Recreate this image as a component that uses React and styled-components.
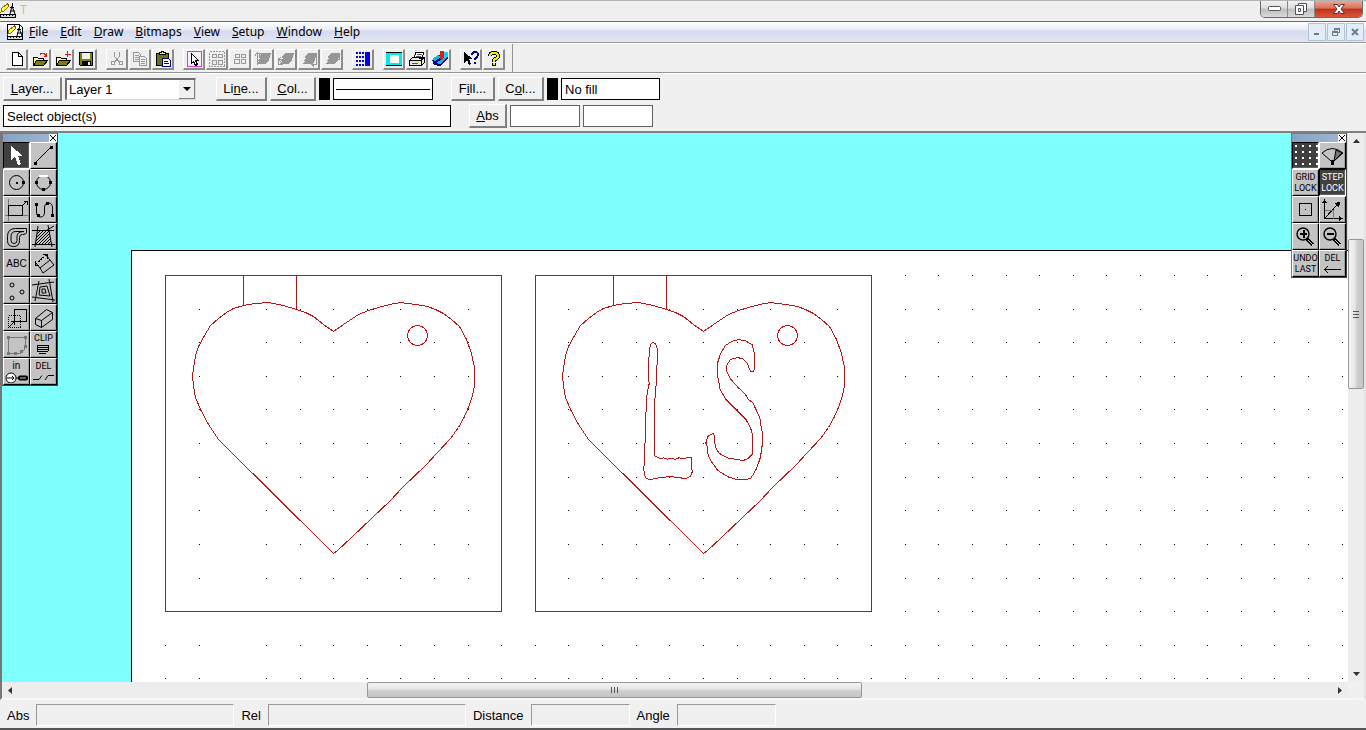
import React, { useState } from "react";
import styled, { createGlobalStyle } from "styled-components";

const GlobalStyle = createGlobalStyle`
    * {
        box-sizing: border-box;
    }

    body {
        margin: 0;
        background: #f0f0f0;
        color: #000;
        font: 13px "Liberation Sans", Arial, sans-serif;
    }

    button,
    input,
    select {
        font: inherit;
        color: inherit;
        margin: 0;
    }

    svg {
        display: block;
    }
`;

const Window = styled.div`
    height: 100vh;
    display: flex;
    flex-direction: column;
    overflow: hidden;
`;

const TitleBar = styled.header`
    height: 22px;
    flex: none;
    display: flex;
    align-items: flex-start;
    border-top: 1px solid #b4b4b4;
    border-bottom: 1px solid #6e6e6e;
    background: #efefef;
`;

const TitleIcon = styled.span`
    padding-top: 1px;
`;

const TitleText = styled.span`
    margin-left: 4px;
    font-family: "Liberation Sans Narrow", "Roboto", sans-serif;
    font-size: 12px;
    line-height: 19px;
    color: #e4b478;
`;

const WindowButtons = styled.div`
    margin-left: auto;
    margin-right: 3px;
    display: flex;
    border: 1px solid #6a6a6a;
    border-top: 0;
    border-radius: 0 0 5px 5px;
    overflow: hidden;
`;

const WindowButton = styled.button`
    width: ${(props) => (props.$close ? 47 : 27)}px;
    height: 16px;
    padding: 0;
    display: flex;
    align-items: center;
    justify-content: center;
    border: 0;
    border-right: ${(props) => (props.$close ? "0" : "1px solid #8a8a8a")};
    background: ${(props) =>
        props.$close
            ? "linear-gradient(#e8a894, #d9705a 45%, #c03018 50%, #d8583c)"
            : "linear-gradient(#f2f2f2, #dcdcdc 45%, #bdbdbd 50%, #dadada)"};
`;

const MenuBar = styled.nav`
    height: 21px;
    flex: none;
    display: flex;
    align-items: center;
    padding: 0 2px 0 7px;
    border-bottom: 1px solid #9a9a9a;
    background: linear-gradient(#fff, #e8ecf7 40%, #d5dbee 45%, #e2e7f5);
`;

const MenuItem = styled.button`
    height: 19px;
    padding: 0 6px;
    border: 0;
    background: none;
    font-family: "Noto Sans", "Open Sans", sans-serif;
    font-size: 12px;
    line-height: 18px;
`;

const ChildButtons = styled.div`
    margin-left: auto;
    display: flex;
    gap: 1px;
`;

const ChildButton = styled.button`
    width: 18px;
    height: 18px;
    padding: 0;
    display: flex;
    align-items: center;
    justify-content: center;
    border: 1px solid #b4c4d8;
    background: #e2edf8;
`;

const ToolBar = styled.div`
    height: 30px;
    flex: none;
    display: flex;
    gap: 8px;
    padding-left: 6px;
    border-top: 1px solid #fff;
    border-bottom: 1px solid #969696;
`;

const ToolGroup = styled.div`
    display: flex;
    gap: 1px;
    padding: 5px 1px 0 0;
`;

const ToolEnd = styled.div`
    width: 1px;
    margin-left: -2px;
    background: #969696;
`;

const ToolButton = styled.button`
    width: 22px;
    height: 21px;
    padding: 0;
    display: flex;
    align-items: center;
    justify-content: center;
    border: 1px solid #fff;
    border-right: 2px solid #8c8c8c;
    border-bottom: 2px solid #8c8c8c;
    background: #efefef;
`;

const Controls = styled.div`
    height: 60px;
    flex: none;
    display: flex;
    flex-direction: column;
    gap: 3px;
    padding: 3px 3px 0;
    border-top: 1px solid #fff;
    border-bottom: 2px solid #808080;
`;

const ControlRow = styled.div`
    height: 24px;
    flex: none;
    display: flex;
    align-items: center;
    gap: 3px;
`;

const Gap = styled.span`
    width: ${(props) => props.$size}px;
`;

const PushButton = styled.button`
    width: ${(props) => props.$width}px;
    height: 24px;
    padding: 0;
    border: 1px solid #fff;
    border-right: 2px solid #808080;
    border-bottom: 2px solid #808080;
    background: #f0f0f0;
`;

const ComboBox = styled.label`
    position: relative;
    width: 131px;
    height: 22px;
    border: 2px solid #6e6e6e;
    border-right: 1px solid #d8d8d8;
    border-bottom: 1px solid #d8d8d8;
    background: #fff;
`;

const ComboSelect = styled.select`
    width: 100%;
    height: 19px;
    padding: 0 18px 0 2px;
    border: 0;
    appearance: none;
    background: #fff;
`;

const ComboArrow = styled.span`
    position: absolute;
    top: 0;
    right: 0;
    width: 16px;
    height: 19px;
    display: flex;
    align-items: center;
    justify-content: center;
    border-right: 1px solid #808080;
    border-bottom: 1px solid #808080;
    background: #f0f0f0;
    pointer-events: none;
`;

const Swatch = styled.span`
    width: 11px;
    height: 22px;
    background: #000;
`;

const LineSample = styled.div`
    width: 100px;
    height: 22px;
    padding: 0 2px;
    display: flex;
    align-items: center;
    border: 1px solid #000;
    background: #fff;
`;

const LineStroke = styled.hr`
    width: 100%;
    margin: 0;
    border: 0;
    border-top: 1px solid #000;
`;

const Field = styled.input`
    width: ${(props) => props.$width}px;
    height: 22px;
    padding: 0 3px;
    border: 1px solid ${(props) => (props.$soft ? "#606060" : "#000")};
    background: #fff;
`;

const Workspace = styled.main`
    flex: 1;
    min-height: 0;
    display: grid;
    grid-template-columns: minmax(0, 1fr) 16px;
    grid-template-rows: minmax(0, 1fr) 16px;
    border-left: 2px solid #777;
    border-right: 2px solid #e4e4e4;
    border-bottom: 2px solid #f7f7f7;
`;

const Canvas = styled.section`
    position: relative;
    overflow: hidden;
    background: #80ffff;
`;

const Palette = styled.aside`
    position: absolute;
    top: 0;
    ${(props) => props.$side}: ${(props) => (props.$side === "left" ? 0 : 1)}px;
    border: 1px solid #404040;
    border-top-color: #777;
    border-left-color: #777;
    background: #000;
`;

const PaletteTitle = styled.div`
    height: 8px;
    display: flex;
    justify-content: flex-end;
    background: linear-gradient(90deg, #86a2c4, #a2b8d4);
`;

const PaletteClose = styled.button`
    width: 8px;
    height: 8px;
    padding: 0;
    display: flex;
    align-items: center;
    justify-content: center;
    border: 0;
    background: #fff;
`;

const PaletteGrid = styled.div`
    display: grid;
    grid-template-columns: 27px 27px;
    grid-auto-rows: 27px;
`;

const PaletteButton = styled.button`
    padding: 0;
    display: flex;
    flex-direction: column;
    align-items: center;
    justify-content: center;
    border: 1px solid;
    border-color: ${(props) =>
        props.$on ? "#000 #fff #fff #000" : "#fff #000 #000 #fff"};
    box-shadow: inset -1px -1px
        ${(props) => (props.$on ? "#606060" : "#a0a0a0")};
    background: ${(props) => (props.$on ? "#404040" : "#c3c3c3")};
    color: ${(props) => (props.$on ? "#fff" : "#000")};
`;

const TinyText = styled.span`
    font-family: "Liberation Sans Narrow", "Roboto", sans-serif;
    font-size: 9px;
    line-height: 11px;
`;

const SmallText = styled.span`
    font-size: 10px;
    line-height: 12px;
`;

const ScrollBar = styled.div`
    display: flex;
    flex-direction: ${(props) => (props.$vertical ? "column" : "row")};
    background: #ededed;
`;

const ScrollArrow = styled.button`
    flex: 0 0 17px;
    padding: 0;
    display: flex;
    align-items: center;
    justify-content: center;
    border: 0;
    background: none;
`;

const ScrollSpace = styled.div`
    flex: ${(props) => props.$part} 1 0;
`;

const ScrollThumb = styled.div`
    flex: ${(props) => props.$part} 1 0;
    display: flex;
    align-items: center;
    justify-content: center;
    border: 1px solid #969696;
    border-radius: 2px;
    background: linear-gradient(
        ${(props) => (props.$vertical ? "90deg" : "180deg")},
        #f5f5f5,
        #e4e4e4 45%,
        #cfcfcf 55%,
        #c4c4c4
    );
`;

const StatusBar = styled.footer`
    height: 30px;
    flex: none;
    display: flex;
    align-items: center;
    gap: 7px;
    padding: 2px 7px 0;
    border-bottom: 2px solid #555;
`;

const StatusLabel = styled.label`
    display: flex;
    align-items: center;
    gap: 7px;
`;

const StatusField = styled.input`
    width: ${(props) => props.$width}px;
    height: 22px;
    padding: 0 3px;
    border: 1px solid #fff;
    border-top-color: #9a9a9a;
    border-left-color: #9a9a9a;
    background: #efefef;
`;

const Pix = ({ size = 16, children }) => (
    <svg
        width={size}
        height={size}
        viewBox={`0 0 ${size} ${size}`}
        fill="none"
        stroke="#000"
        shapeRendering="crispEdges"
        aria-hidden="true"
    >
        {children}
    </svg>
);

const AppLogo = ({ page }) => (
    <Pix size={16}>
        {page && <path d="M.5.5h12l3 3v12H.5z" fill="#fff" />}
        <path d="M1 10l1-4 5-4 2 2-5 5z" fill="#ffff30" stroke="#807000" />
        <path d="M6 2l2-1 1 2-1 1z" fill="#e02020" stroke="none" />
        <path d="M12 1v3M10 5h4" />
        <path d="M12 4l-2 8M12 4l3 8M10 9h5" shapeRendering="auto" />
        <path d="M.5 12.5h15v3H.5z" fill="#d8e0d0" />
        <path d="M3.5 13v1M6.5 13v1M9.5 13v1M12.5 13v1" />
    </Pix>
);

const Folder = () => (
    <>
        <path d="M1.5 14V6.5h4l1 1h5V10" fill="#ffff80" />
        <path d="M1.5 14.5l3-5h11l-4 5z" fill="#808000" />
    </>
);

const Stack = () => (
    <path
        d="M7 2h9v1l-2 2h1v1l-2 2h1v1l-4 4H2v-1l2-2H3V9l2-2H4V6z"
        fill="#969696"
        stroke="none"
    />
);

const fileTools = [
    ["New", <path d="M3.5 1.5h6l4 4v9h-10zM9.5 1.5v4h4" fill="#fff" />],
    [
        "Open",
        <>
            <Folder />
            <path d="M8 3.5q3-3 6 1M14.500 2v3h-3" stroke="#d02020" />
        </>,
    ],
    [
        "Insert",
        <>
            <Folder />
            <path d="M12.500 0v6M10 3h6" stroke="#d02020" />
        </>,
    ],
    [
        "Save",
        <>
            <path d="M1.500 1.500h13v13h-12l-1-1z" fill="#808000" />
            <path d="M4 2h8v6H4z" fill="#efefef" stroke="none" />
            <path d="M4 10h9v5H4z" fill="#000" stroke="none" />
            <path d="M10 11h2v3h-2z" fill="#efefef" stroke="none" />
        </>,
    ],
];

const editTools = [
    [
        "Cut",
        <g stroke="#999">
            <path d="M5 1l1 5 5 6M11 1l-1 5-5 6" />
            <circle cx="4" cy="12" r="2" />
            <circle cx="12" cy="12" r="2" />
        </g>,
    ],
    [
        "Copy",
        <g stroke="#999">
            <path d="M1.500 1.500h5l2 2v7h-7zM3 4.500h4M3 6.500h4M3 8.500h4" />
            <path
                d="M7.500 5.500h5l2 2v7h-7zM9 8.500h4M9 10.500h4M9 12.500h4"
                fill="#efefef"
            />
        </g>,
    ],
    [
        "Paste",
        <>
            <path d="M1.500 2.500h12v12h-12z" fill="#707018" />
            <path d="M4.500 3.500h6v-2h-2v-1h-2v1h-2z" fill="#e8e8a0" />
            <path d="M7.500 7.500h6l2 2v6h-8z" fill="#fff" stroke="#000080" />
            <path d="M9 10.500h4M9 12.500h5" stroke="#000080" />
        </>,
    ],
];

const objectTools = [
    [
        "Select",
        <>
            <path d="M1.500.5h14v15h-14z" fill="#fbeefb" stroke="#d838d8" />
            <path d="M5.500 2.500v10l2-2 2 4 2-1-2-4h3z" fill="#fff" />
        </>,
    ],
    [
        "Group",
        <g stroke="#999">
            <path d="M.5.5h15v15H.5z" strokeDasharray="2 1" />
            <path d="M3.500 3.500h4v3h-4zM9.500 3.500h4v3h-4zM3.500 9.500h4v4h-4zM9.500 9.500h4v4h-4z" />
        </g>,
    ],
    [
        "Ungroup",
        <g stroke="#999">
            <path d="M3.500 3.500h4v3h-4zM9.500 3.500h4v3h-4zM2.500 8.500h5v4h-5zM9.500 8.500h4v4h-4z" />
        </g>,
    ],
    [
        "To front",
        <>
            <Stack />
            <path d="M2.500 14V2M0 4.500l2.500-3 2.500 3M2 2.500h6" stroke="#969696" />
        </>,
    ],
    [
        "Forward",
        <>
            <Stack />
            <path d="M6 8.500H.5v5H5M3 6l-3 2.500 3 2" stroke="#969696" />
        </>,
    ],
    [
        "Backward",
        <>
            <Stack />
            <path d="M12 4.500h3.500v9H11M13 11l-2 2.500 2 2" stroke="#969696" />
        </>,
    ],
    [
        "To back",
        <>
            <Stack />
            <path d="M10 8.500h5.500V3" stroke="#969696" />
        </>,
    ],
];

const gridTools = [
    [
        "Grid",
        <>
            <path
                d="M2 1v14M5 1v14M8 1v14"
                stroke="#0000e0"
                strokeWidth="2"
                strokeDasharray="2 2"
            />
            <path d="M10 1h5v14h-5z" fill="#0000f0" stroke="none" />
        </>,
    ],
];

const viewTools = [
    [
        "Full view",
        <>
            <path d="M0 1h16v14H0z" fill="#00e8f0" stroke="none" />
            <path d="M0 1.500h16M0 14.500h16" />
            <path d="M4 4h9v8H4z" fill="#fff" stroke="none" />
        </>,
    ],
    [
        "Print",
        <>
            <path d="M5 7l2-6h8l-2 6z" fill="#fff" />
            <path d="M.5 9.500l3-3h12v5l-3 3H.5zM1 9.500h11l3-3M12.500 9.500v4" fill="#e8e8e8" />
            <path d="M8 3.500h5M7 5.500h5M3 12h6" stroke="#555" />
            <path d="M8 11h2v1H8z" fill="#e8e800" stroke="none" />
        </>,
    ],
    [
        "Library",
        <>
            <path d="M0 9l8-5 8 0v4l-8 7-6-1z" fill="#000090" stroke="none" />
            <path d="M0 8l6-4 3 2-6 4zM4 12l9-6h3l-8 7z" fill="#10b8e0" stroke="none" />
            <path d="M8 0h4v7l-3 2-1-1z" fill="#d82020" stroke="none" />
            <path d="M12 1h4v5l-4 1z" fill="#10d8e8" stroke="none" />
        </>,
    ],
];

const helpTools = [
    [
        "What is this",
        <>
            <path d="M1 1v11l3-3 2 5 2-1-2-5h4z" fill="#000" stroke="none" />
            <path
                d="M9 4q0-3 3-3 3 0 3 3 0 1-3 4v1M12 11v2"
                stroke="#000080"
                strokeWidth="2"
            />
        </>,
    ],
    [
        "Help topics",
        <>
            <path d="M4 5q0-3 4-3t4 3q0 2-4 4v2M8 12v3" strokeWidth="4" />
            <path d="M4 5q0-3 4-3t4 3q0 2-4 4v2M8 12v2" stroke="#f0f000" strokeWidth="2" />
        </>,
    ],
];

const toolGroups = [
    fileTools,
    editTools,
    objectTools,
    gridTools,
    viewTools,
    helpTools,
];

const Magnifier = ({ plus }) => (
    <Pix size={25}>
        <circle cx="10" cy="10" r="6" strokeWidth="1.400" shapeRendering="auto" />
        <path d="M7 10h7" strokeWidth="2" />
        {plus && <path d="M10.500 6v8" strokeWidth="2" />}
        <path d="M14 15l6 6" strokeWidth="4" />
        <path d="M15 16l5 5" stroke="#c8c8c8" />
    </Pix>
);

const drawTools = [
    [
        "Select",
        <Pix size={25}>
            <path
                d="M7 3v14l4-3 3 8 3-1-3-8h5z"
                fill="#fff"
                stroke="none"
            />
        </Pix>,
    ],
    [
        "Line",
        <Pix size={25}>
            <path d="M4 20L20 4" />
            <path d="M3 19h3v3H3zM19 3h3v3h-3z" fill="#000" stroke="none" />
        </Pix>,
    ],
    [
        "Circle",
        <Pix size={25}>
            <circle cx="12.500" cy="12.500" r="7" shapeRendering="auto" />
            <path d="M12 12h2v2h-2zM18 11h3v3h-3z" fill="#000" stroke="none" />
        </Pix>,
    ],
    [
        "Arc",
        <Pix size={25}>
            <circle cx="12.500" cy="12.500" r="7" shapeRendering="auto" />
            <path d="M8 6.500q4-2 9 0" stroke="#fff" strokeWidth="2" />
            <path
                d="M4 11h3v3H4zM18 11h3v3h-3zM11 18h3v3h-3z"
                fill="#000"
                stroke="none"
            />
        </Pix>,
    ],
    [
        "Rectangle",
        <Pix size={25}>
            <path d="M4.500 2v22M1 18.500h23" stroke="#777" />
            <path d="M4.500 8.500h14v10h-14zM18 9l4-4M20 4.500h3.500v3" />
        </Pix>,
    ],
    [
        "Curve",
        <Pix size={25}>
            <path
                d="M5.500 8v7q0 5 4 5t4-5v-4q0-5 4-5t4 5v8"
                shapeRendering="auto"
            />
            <path
                d="M4 6h3v3H4zM6 17h3v3H6zM15 5h3v3h-3zM20 17h3v3h-3z"
                fill="#000"
                stroke="none"
            />
        </Pix>,
    ],
    [
        "Offset",
        <Pix size={25}>
            <g shapeRendering="auto">
                <path d="M22.500 4.500h-11q-8 0-8 8v4q0 6 6 6t6-6v-3q0-3 3-3 4 0 4-2z" />
                <path d="M20 7.500h-8q-5 0-5 5v4q0 3 3 3t3-3v-4q0-5 7-5" />
            </g>
        </Pix>,
    ],
    [
        "Hatch",
        <Pix size={25}>
            <path d="M1 6.500h22M17 1l4 22M7 2L4 23M1 20.500h23M16 6l7-4" shapeRendering="auto" />
            <path
                d="M6 10l4-4M6 13l7-7M5 17L16 6M5 20L18 7M8 20L19 9M11 20l8-8M14 20l6-6M17 20l3-3"
                shapeRendering="auto"
            />
        </Pix>,
    ],
    ["Text", <SmallText>ABC</SmallText>],
    [
        "Dimension",
        <Pix size={25}>
            <path d="M9 17l10-8 4 5-11 8zM5 12l4 5M15 4l4 5" shapeRendering="auto" />
            <path d="M5 13L15 4" strokeDasharray="2 1" />
            <path d="M4 10v4h4M12 3.500h4v4" />
        </Pix>,
    ],
    [
        "Point",
        <Pix size={25}>
            <g shapeRendering="auto">
                <circle cx="8" cy="7" r="2" />
                <circle cx="18" cy="14" r="2" />
                <circle cx="8" cy="20" r="2" />
            </g>
        </Pix>,
    ],
    [
        "Contour",
        <Pix size={25}>
            <g shapeRendering="auto">
                <path d="M1 7l22-3M18 1l4 23M8 3L4 23M1 19l23 3" />
                <path d="M9 9l7-1 3 10-11-1zM11 11h3l1 4h-4z" />
            </g>
        </Pix>,
    ],
    [
        "Scale",
        <Pix size={25}>
            <path d="M4.500 10.500h12v12h-12z" strokeDasharray="1 1" />
            <path d="M10.500 4.500h12v12h-12zM5 22l5-5M7 16.500h3.500V20" />
        </Pix>,
    ],
    [
        "Solid",
        <Pix size={25}>
            <g shapeRendering="auto">
                <path d="M4.500 13.500l11-9 6 3v7l-11 8-6-3zM4.500 13.500l6 2v7M10.500 15.500l11-8" />
            </g>
        </Pix>,
    ],
    [
        "Edit nodes",
        <Pix size={25}>
            <path d="M4.500 5.500h17v9q-2 8-10 7h-7z" stroke="#777" />
            <path
                d="M3 4h3v3H3zM20 4h3v3h-3zM20 13h3v3h-3zM16 18h3v3h-3zM10 20h3v3h-3zM3 20h3v3H3z"
                fill="#777"
                stroke="none"
            />
        </Pix>,
    ],
    [
        "Clipboard",
        <>
            <TinyText>CLIP</TinyText>
            <Pix size={13}>
                <path d="M0 1.500h12M0 3.500h12M0 5.500h12M1 7.500h10M2 9.500h7M.5 1v7M11.500 1v6" />
            </Pix>
        </>,
    ],
    [
        "Units",
        <>
            <SmallText>in</SmallText>
            <svg width="23" height="11" fill="none" stroke="#000" aria-hidden="true">
                <circle cx="6" cy="6" r="5" fill="#fff" />
                <path d="M2 6h7M7 4l2 2-2 2M11 6h3" />
                <rect x="14" y="4.500" width="8" height="3" rx="1" strokeWidth="2" />
            </svg>
        </>,
    ],
    [
        "Delete part",
        <>
            <TinyText>DEL</TinyText>
            <svg width="23" height="11" fill="none" stroke="#000" aria-hidden="true">
                <path d="M1 7.500h6l3-4M13 8l3-4.500h6" />
            </svg>
        </>,
    ],
];

const dotRows = [2, 8, 14, 20];

const snapTools = [
    [
        "Show grid",
        <Pix size={25}>
            {dotRows.map((y) => (
                <path
                    key={y}
                    d={`M2 ${y + 1}h23`}
                    stroke="#fff"
                    strokeWidth="2"
                    strokeDasharray="2 5"
                />
            ))}
        </Pix>,
    ],
    [
        "Redraw",
        <Pix size={25}>
            <g shapeRendering="auto">
                <path d="M2 10q10-9 21 0l-9 8h-3z" />
                <path d="M16 7l6 3-8 8z" fill="#777" />
                <path d="M11 17h3v5h-3z" fill="#000" stroke="none" />
            </g>
        </Pix>,
    ],
    [
        "Grid lock",
        <>
            <TinyText>GRID</TinyText>
            <TinyText>LOCK</TinyText>
        </>,
    ],
    [
        "Step lock",
        <>
            <TinyText>STEP</TinyText>
            <TinyText>LOCK</TinyText>
        </>,
    ],
    [
        "Attach",
        <Pix size={25}>
            <path d="M6.500 6.500h12v12h-12z" />
            <path d="M12 12h1v1h-1z" fill="#000" stroke="none" />
        </Pix>,
    ],
    [
        "Axes",
        <Pix size={25}>
            <path d="M4.500 3v18.500H23M5 21L18 7" />
            <path
                d="M2 6l2.500-4L7 6zM19 19l4 2.500-4 2.500zM14 6l6-1-1 6z"
                fill="#000"
                stroke="none"
            />
            <path d="M5 13.500h8v8" stroke="#777" />
        </Pix>,
    ],
    ["Zoom in", <Magnifier plus />],
    ["Zoom out", <Magnifier />],
    [
        "Undo last",
        <>
            <TinyText>UNDO</TinyText>
            <TinyText>LAST</TinyText>
        </>,
    ],
    [
        "Delete",
        <>
            <TinyText>DEL</TinyText>
            <svg width="19" height="11" fill="none" stroke="#000" aria-hidden="true">
                <path d="M1 5.500h17M5 2L1.500 5.500 5 9" />
            </svg>
        </>,
    ],
];

const menus = ["File", "Edit", "Draw", "Bitmaps", "View", "Setup", "Window", "Help"];

const HEART =
    "168,56 158,49 148,41 140,37 131,34 118,30 103,27 90,28 78,30 68,33 61,37 53,43 45,50 39,60 33,71 30,80 28,93 27,100 28,110 30,122 35,134 43,149 53,164 168,278 172,275 186,262 206,243 225,225 237,212 260,190 285,163 293,152 299,141 303,132 307,120 309,110 309,92 306,78 301,64 294,51 286,44 278,38 270,34 262,31 250,29 235,27 224,29 213,32 203,35 193,39 181,47";

const LETTER_L =
    "67,66 75,70 80,85 82,105 78,150 77,190 71,265 71,405 88,414 100,412 112,416 122,413 134,417 145,412 158,415 170,412 184,412 183,430 185,455 180,468 165,475 140,470 115,469 90,471 60,477 48,475 41,462 40,440 43,425 44,320 50,215 56,190 53,150 57,85 62,70";

const LETTER_S =
    "373,145 367,154 360,152 350,128 338,116 322,111 300,117 288,135 288,152 300,175 322,200 345,222 352,235 367,247 378,270 388,292 391,315 397,345 395,375 390,410 378,445 362,472 345,478 322,478 295,470 262,450 240,420 232,400 231,380 226,368 232,348 248,338 252,345 254,378 265,397 282,408 300,415 320,416 335,421 352,415 367,400 367,345 360,322 347,298 322,272 285,235 268,205 265,185 260,160 262,125 270,100 285,75 305,62 325,57 345,61 365,73 370,90 373,115";

const GRID_STEP = 33.62;

const GridDots = () => {
    const dots = [];
    for (let row = 0; row < 40; row++) {
        for (let col = 0; col < 80; col++) {
            // the third column is blank on the sheet
            if (col === 3) continue;
            dots.push(
                `M${Math.round(129.4 + col * GRID_STEP)} ${Math.round(
                    142 + row * GRID_STEP
                )}h1v1h-1z`
            );
        }
    }
    return <path d={dots.join("")} fill="#000" stroke="none" />;
};

const Piece = ({ x, y, children }) => (
    <g transform={`translate(${x} ${y})`}>
        <rect width="336" height="336" />
        <path d="M78 0v30M131 0v34" />
        <polygon points={HEART} />
        <circle cx="252" cy="60" r="10" />
        {children}
    </g>
);

const Drawing = () => (
    <svg width="100%" height="100%" shapeRendering="crispEdges">
        <rect x="129" y="117" width="100%" height="100%" fill="#000" />
        <rect x="130" y="118" width="100%" height="100%" fill="#fff" />
        <GridDots />
        <g fill="none" stroke="#b81414" transform="translate(.5 .5)">
            <Piece x={163} y={142} />
            <Piece x={533} y={142}>
                <g transform="translate(95 45) scale(.3333)">
                    <polygon points={LETTER_L} vectorEffect="non-scaling-stroke" />
                    <polygon points={LETTER_S} vectorEffect="non-scaling-stroke" />
                </g>
            </Piece>
        </g>
    </svg>
);

const ToolPalette = ({ side, tools, active }) => (
    <Palette $side={side}>
        <PaletteTitle>
            <PaletteClose aria-label="Close palette">
                <Pix size={6}>
                    <path d="M0 0l6 6M6 0L0 6" />
                </Pix>
            </PaletteClose>
        </PaletteTitle>
        <PaletteGrid>
            {tools.map(([name, icon]) => (
                <PaletteButton
                    key={name}
                    $on={active.includes(name)}
                    aria-label={name}
                >
                    {icon}
                </PaletteButton>
            ))}
        </PaletteGrid>
    </Palette>
);

const Arrow = ({ d, label }) => (
    <ScrollArrow aria-label={label}>
        <svg width="7" height="7" aria-hidden="true">
            <path d={d} fill="#333" />
        </svg>
    </ScrollArrow>
);

const StatusItem = ({ label, width }) => (
    <StatusLabel>
        {label}
        <StatusField $width={width} readOnly />
    </StatusLabel>
);

export default function App() {
    const [layer, setLayer] = useState("Layer 1");

    return (
        <Window>
            <GlobalStyle />
            <TitleBar>
                <TitleIcon>
                    <AppLogo />
                </TitleIcon>
                <TitleText>T</TitleText>
                <WindowButtons>
                    <WindowButton aria-label="Minimize">
                        <svg width="13" height="6">
                            <rect x=".5" y=".5" width="12" height="4" rx="1" fill="#fff" stroke="#555" />
                        </svg>
                    </WindowButton>
                    <WindowButton aria-label="Restore">
                        <svg width="12" height="12" fill="#fff" stroke="#50505c">
                            <path d="M3.500.5h8v8h-8z" />
                            <path d="M.5 2.500h8v9h-8z" />
                            <path d="M3.500 5.500h2v3h-2z" />
                        </svg>
                    </WindowButton>
                    <WindowButton $close aria-label="Close">
                        <svg width="12" height="10" fill="#fff" stroke="#5a3030">
                            <path d="M.5.5h4L6 3 7.500.5h4L8 5l3.500 4.500h-4L6 7 4.500 9.500h-4L4 5z" />
                        </svg>
                    </WindowButton>
                </WindowButtons>
            </TitleBar>

            <MenuBar>
                <AppLogo page />
                {menus.map((name) => (
                    <MenuItem key={name}>
                        <u>{name[0]}</u>
                        {name.slice(1)}
                    </MenuItem>
                ))}
                <ChildButtons>
                    <ChildButton aria-label="Minimize drawing">
                        <Pix size={8}>
                            <path d="M1 6h5" stroke="#6a7f96" strokeWidth="2" />
                        </Pix>
                    </ChildButton>
                    <ChildButton aria-label="Restore drawing">
                        <Pix size={8}>
                            <path d="M2.500 3V.5h5v4H6M2 1h6M.5 3.500h5v4h-5zM0 4h6" stroke="#6a7f96" />
                        </Pix>
                    </ChildButton>
                    <ChildButton aria-label="Close drawing">
                        <svg width="8" height="8">
                            <path d="M1 1l6 6M7 1L1 7" stroke="#6a7f96" strokeWidth="2" />
                        </svg>
                    </ChildButton>
                </ChildButtons>
            </MenuBar>

            <ToolBar>
                {toolGroups.map((group, index) => (
                    <ToolGroup key={index}>
                        {group.map(([name, icon]) => (
                            <ToolButton key={name} aria-label={name}>
                                <Pix>{icon}</Pix>
                            </ToolButton>
                        ))}
                    </ToolGroup>
                ))}
                <ToolEnd />
            </ToolBar>

            <Controls>
                <ControlRow>
                    <PushButton $width={59}>
                        <u>L</u>ayer...
                    </PushButton>
                    <ComboBox>
                        <ComboSelect
                            aria-label="Layer"
                            value={layer}
                            onChange={(event) => setLayer(event.target.value)}
                        >
                            <option>Layer 1</option>
                        </ComboSelect>
                        <ComboArrow>
                            <svg width="8" height="4">
                                <path d="M0 0h8L4 4z" />
                            </svg>
                        </ComboArrow>
                    </ComboBox>
                    <Gap $size={14} />
                    <PushButton $width={51}>
                        Li<u>n</u>e...
                    </PushButton>
                    <PushButton $width={46}>
                        <u>C</u>ol...
                    </PushButton>
                    <Swatch />
                    <LineSample>
                        <LineStroke />
                    </LineSample>
                    <Gap $size={12} />
                    <PushButton $width={44}>
                        F<u>i</u>ll...
                    </PushButton>
                    <PushButton $width={46}>
                        C<u>o</u>l...
                    </PushButton>
                    <Swatch />
                    <Field $width={99} aria-label="Fill" readOnly value="No fill" />
                </ControlRow>
                <ControlRow>
                    <Field
                        $width={448}
                        aria-label="Prompt"
                        readOnly
                        value="Select object(s)"
                    />
                    <Gap $size={12} />
                    <PushButton $width={38}>
                        <u>A</u>bs
                    </PushButton>
                    <Field $width={70} $soft aria-label="X" />
                    <Field $width={70} $soft aria-label="Y" />
                </ControlRow>
            </Controls>

            <Workspace>
                <Canvas>
                    <Drawing />
                    <ToolPalette side="left" tools={drawTools} active={["Select"]} />
                    <ToolPalette
                        side="right"
                        tools={snapTools}
                        active={["Show grid", "Step lock"]}
                    />
                </Canvas>
                <ScrollBar $vertical>
                    <Arrow label="Scroll up" d="M0 5h7L3.500 1z" />
                    <ScrollSpace $part={89} />
                    <ScrollThumb $part={149} $vertical>
                        <Pix size={8}>
                            <path d="M1 1.500h6M1 4.500h6M1 7.500h6" stroke="#555" />
                        </Pix>
                    </ScrollThumb>
                    <ScrollSpace $part={277} />
                    <Arrow label="Scroll down" d="M0 2h7L3.500 6z" />
                </ScrollBar>
                <ScrollBar>
                    <Arrow label="Scroll left" d="M5 0v7L1 3.500z" />
                    <ScrollSpace $part={349} />
                    <ScrollThumb $part={493}>
                        <Pix size={8}>
                            <path d="M.5 1v6M3.500 1v6M6.500 1v6" stroke="#555" />
                        </Pix>
                    </ScrollThumb>
                    <ScrollSpace $part={470} />
                    <Arrow label="Scroll right" d="M2 0v7l4-3.500z" />
                </ScrollBar>
            </Workspace>

            <StatusBar>
                <StatusItem label="Abs" width={198} />
                <StatusItem label="Rel" width={198} />
                <StatusItem label="Distance" width={99} />
                <StatusItem label="Angle" width={99} />
            </StatusBar>
        </Window>
    );
}
